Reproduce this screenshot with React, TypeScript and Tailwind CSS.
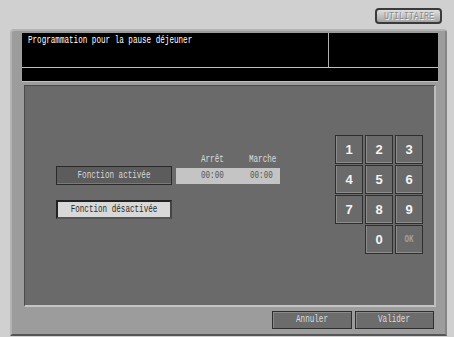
function T({
  children,
  className = "",
  origin = "origin-center",
}: {
  children: React.ReactNode;
  className?: string;
  origin?: string;
}) {
  return (
    <span
      className={`inline-block whitespace-nowrap font-['Liberation_Mono',monospace] text-[10px] leading-none scale-x-[0.76] ${origin} ${className}`}
    >
      {children}
    </span>
  );
}

export default function App() {
  const keys = ["1", "2", "3", "4", "5", "6", "7", "8", "9"];
  const keyCls =
    "h-[29px] bg-[#6a6a6a] border border-[#2e2e2e] shadow-[inset_1px_-1px_0_#8c8c8c] flex items-center justify-center font-['Liberation_Sans',Arial,sans-serif] font-bold text-[13px] text-[#f4f4f4]";
  return (
    <div className="w-[454px] h-[337px] bg-[#d0d0d0] flex flex-col overflow-hidden">
      <div className="h-[29px] flex justify-end pr-[12px] pt-[8px] shrink-0">
        <div className="w-[67px] h-[16px] rounded-[4px] border-2 border-[#3a3a3a] bg-gradient-to-b from-[#e0e0e0] to-[#a4a4a4] flex items-center justify-center">
          <T className="text-[#8a8a8a] text-[11px] scale-x-[0.68] [text-shadow:1px_1px_0_#f0f0f0]">UTILITAIRE</T>
        </div>
      </div>
      <div className="ml-[10px] mr-[7px] h-[307px] rounded-t-[4px] bg-[#9c9c9c] border-2 border-t-[#b4b4b4] border-l-[#b4b4b4] border-r-[#858585] border-b-[#555555] pt-[2px] pl-[10px] pr-[7px] flex flex-col">
        <div className="bg-black flex flex-col shrink-0">
          <div className="h-[35px] flex border-b border-[#c0c0c0]">
            <div className="flex-1 border-r border-[#b0b0b0] pl-[6px] pt-[3px] flex items-start">
              <T origin="origin-left" className="text-white">
                Programmation pour la pause déjeuner
              </T>
            </div>
            <div className="w-[109px]" />
          </div>
          <div className="h-[14px] border-b border-[#c0c0c0]" />
        </div>
        <div className="mt-[3px] mx-[2px] h-[222px] bg-[#6a6a6a] border-t border-l border-t-[#4a4a4a] border-l-[#4a4a4a] border-r-2 border-b-2 border-r-[#bdbdbd] border-b-[#c4c4c4] flex pl-[31px] pt-[49px] shrink-0">
          <div className="flex flex-col mt-[20px]">
            <div className="flex h-[10px] items-start">
              <div className="w-[120px]" />
              <div className="flex pl-[25px] items-start">
                <span className="flex w-[48px]">
                  <T origin="origin-left" className="text-[#dcdcdc]">Arrêt</T>
                </span>
                <span className="flex">
                  <T origin="origin-left" className="text-[#dcdcdc]">Marche</T>
                </span>
              </div>
            </div>
            <div className="flex items-center mt-[1px] gap-[4px]">
              <div className="w-[116px] h-[19px] bg-[#5c5c5c] border border-[#2a2a2a] shadow-[inset_0_-1px_0_#7a7a7a] flex items-center justify-center">
                <T className="text-[#d8d8d8]">Fonction activée</T>
              </div>
              <div className="w-[104px] h-[16px] bg-[#c4c4c4] flex items-center pl-[25px]">
                <span className="flex w-[51px]">
                  <T origin="origin-left" className="text-[#555555]">00:00</T>
                </span>
                <span className="flex">
                  <T origin="origin-left" className="text-[#555555]">00:00</T>
                </span>
              </div>
            </div>
            <div className="mt-[15px] w-[116px] h-[19px] bg-[#d8d8d8] border-2 border-[#222222] border-r-[#444444] border-b-[#555555] flex items-center justify-center">
              <T className="text-[#2a2a2a]">Fonction désactivée</T>
            </div>
          </div>
          <div className="ml-auto mr-[11px] grid grid-cols-[28px_28px_28px] gap-x-[2px] gap-y-[1px] h-fit">
            {keys.map((k) => (
              <div key={k} className={keyCls}>
                {k}
              </div>
            ))}
            <div />
            <div className={keyCls}>0</div>
            <div className={keyCls}>
              <T className="text-[#a0a0a0] text-[9px]">OK</T>
            </div>
          </div>
        </div>
        <div className="mt-[4px] flex justify-end gap-[3px] mr-[4px]">
          <div className="w-[80px] h-[18px] bg-[#6c6c6c] border border-[#2e2e2e] shadow-[inset_1px_1px_0_#8a8a8a] flex items-center justify-center">
            <T className="text-[#dcdcdc]">Annuler</T>
          </div>
          <div className="w-[79px] h-[18px] bg-[#6c6c6c] border border-[#2e2e2e] shadow-[inset_1px_1px_0_#8a8a8a] flex items-center justify-center">
            <T className="text-[#dcdcdc]">Valider</T>
          </div>
        </div>
      </div>
    </div>
  );
}
